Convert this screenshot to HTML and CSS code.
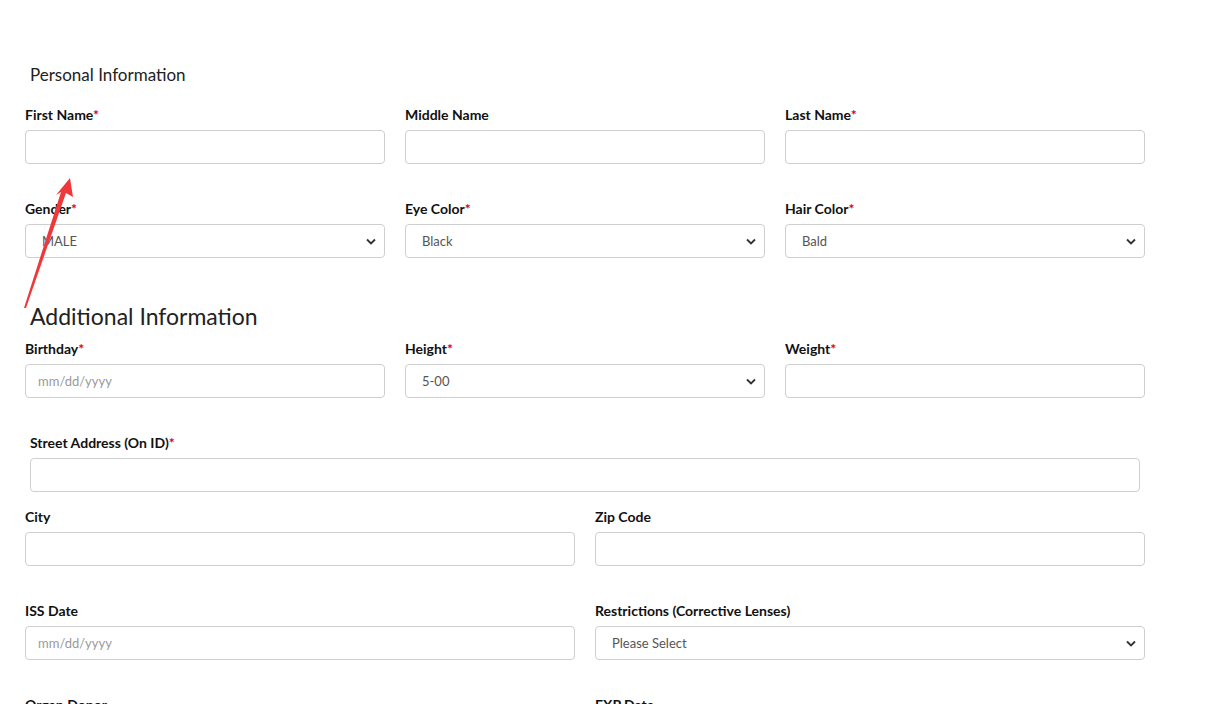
FILE: index.html
```html
<!DOCTYPE html>
<html lang="en">
<head>
  <meta charset="UTF-8" />
  <meta name="viewport" content="width=device-width, initial-scale=1.0"/>
  <title>ID Form</title>
  <link rel="stylesheet" href="styles.css">
</head>
<body>
  <div class="page">
    <h3 class="section-title">Personal Information</h3>

    <div class="row cols-3">
      <div class="field">
        <label>First Name<span class="req">*</span></label>
        <input type="text" />
      </div>
      <div class="field">
        <label>Middle Name</label>
        <input type="text" />
      </div>
      <div class="field">
        <label>Last Name<span class="req">*</span></label>
        <input type="text" />
      </div>
    </div>

    <div class="row cols-3">
      <div class="field">
        <label>Gender<span class="req">*</span></label>
        <select><option>MALE</option></select>
      </div>
      <div class="field">
        <label>Eye Color<span class="req">*</span></label>
        <select><option>Black</option></select>
      </div>
      <div class="field">
        <label>Hair Color<span class="req">*</span></label>
        <select><option>Bald</option></select>
      </div>
    </div>

    <h2 class="section-title big">Additional Information</h2>

    <div class="row cols-3">
      <div class="field">
        <label>Birthday<span class="req">*</span></label>
        <input type="text" placeholder="mm/dd/yyyy" />
      </div>
      <div class="field">
        <label>Height<span class="req">*</span></label>
        <select><option>5-00</option></select>
      </div>
      <div class="field">
        <label>Weight<span class="req">*</span></label>
        <input type="text" />
      </div>
    </div>

    <div class="row wide">
      <div class="field">
        <label>Street Address (On ID)<span class="req">*</span></label>
        <input type="text" />
      </div>
    </div>

    <div class="row cols-2 tight">
      <div class="field">
        <label>City</label>
        <input type="text" />
      </div>
      <div class="field">
        <label>Zip Code</label>
        <input type="text" />
      </div>
    </div>

    <div class="row cols-2">
      <div class="field">
        <label>ISS Date</label>
        <input type="text" placeholder="mm/dd/yyyy" />
      </div>
      <div class="field">
        <label>Restrictions (Corrective Lenses)</label>
        <select><option>Please Select</option></select>
      </div>
    </div>

    <div class="row cols-2">
      <div class="field">
        <label>Organ Donor</label>
        <select><option>Please Select</option></select>
      </div>
      <div class="field">
        <label>EXP Date</label>
        <input type="text" placeholder="mm/dd/yyyy" />
      </div>
    </div>
  </div>

  <!-- annotation arrow drawn over the form -->
  <svg class="annotation" width="120" height="160" viewBox="0 160 120 160">
    <polygon points="70,178 73,197 66,193 26,308 24,308 61,192 56,195" fill="#f0383b" />
  </svg>
</body>
</html>
```

FILE: styles.css
```css
* {
  margin: 0;
  padding: 0;
  box-sizing: border-box;
}

body {
  font-family: 'Lato', 'Liberation Sans', sans-serif;
  background: #fff;
  color: #222;
  overflow: hidden;
}

.page {
  width: 1120px;
  margin-left: 25px;
  padding-top: 64px;
}

.section-title {
  font-size: 17px;
  font-weight: 400;
  line-height: 22px;
  padding-left: 5px;
  margin-bottom: 21px;
  color: #222;
}

.section-title.big {
  font-size: 23px;
  line-height: 30px;
  margin-top: 43px;
  margin-bottom: 10px;
}

.row {
  display: grid;
  column-gap: 20px;
  margin-bottom: 37px;
}

.row.cols-3 {
  grid-template-columns: repeat(3, 1fr);
}

.row.cols-2 {
  grid-template-columns: repeat(2, 1fr);
}

.row.wide {
  padding: 0 5px;
  margin-bottom: 17px;
}

.field label {
  display: block;
  font-size: 14px;
  font-weight: 700;
  line-height: 16px;
  margin-bottom: 7px;
  color: #111;
}

.req {
  color: #d0021b;
}

.field input,
.field select {
  display: block;
  width: 100%;
  height: 34px;
  border: 1px solid #cfcfcf;
  border-radius: 4px;
  background: #fff;
  font-family: inherit;
  font-size: 13px;
  color: #555;
  padding: 0 12px;
  outline: none;
}

.field input::placeholder {
  color: #9a9a9a;
}

.field select {
  appearance: none;
  -webkit-appearance: none;
  padding-left: 16px;
  background-image: url("data:image/svg+xml;utf8,<svg xmlns='http://www.w3.org/2000/svg' width='10' height='7' viewBox='0 0 10 7'><path d='M1 1.5 L5 5.5 L9 1.5' fill='none' stroke='%23333' stroke-width='1.8'/></svg>");
  background-repeat: no-repeat;
  background-position: right 8px center;
  background-size: 10px 7px;
}

.annotation {
  position: absolute;
  left: 0;
  top: 160px;
  pointer-events: none;
}
```
